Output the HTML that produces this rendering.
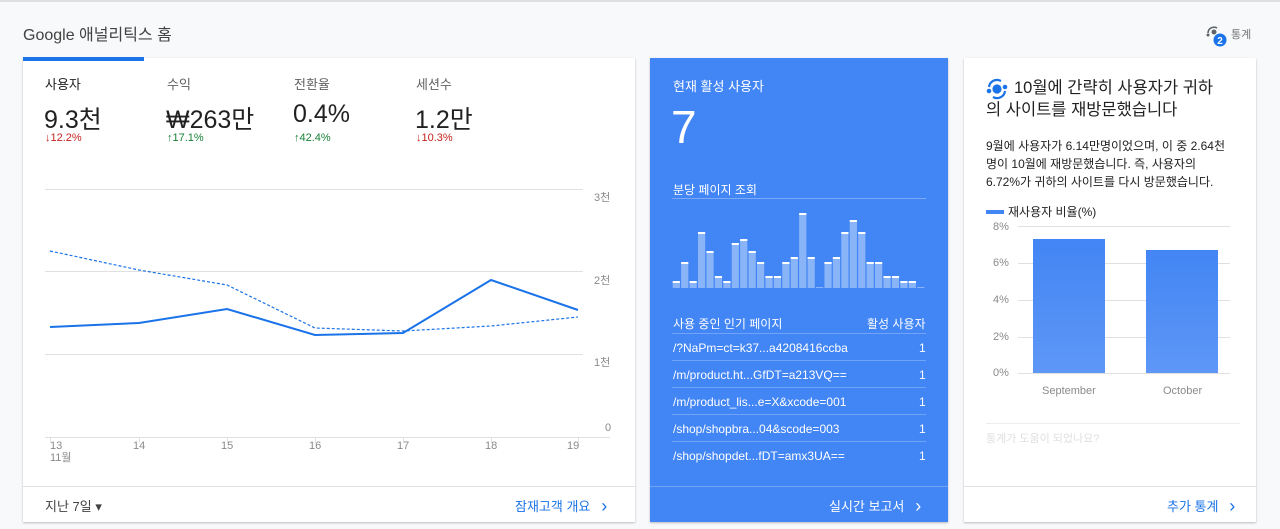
<!DOCTYPE html>
<html><head><meta charset="utf-8"><style>
*{margin:0;padding:0;box-sizing:border-box}
body{width:1280px;height:529px;background:#f8f9fa;font-family:"Liberation Sans","Noto Sans CJK KR",sans-serif;position:relative;overflow:hidden;color:#212121}
.a{position:absolute;white-space:nowrap}
.card{position:absolute;background:#fff;box-shadow:0 1px 2px rgba(0,0,0,.25)}
.lbl{font-size:13px;color:#616161}
.big{font-size:25px;color:#212121}
.dn{font-size:11px;color:#c5221f}
.up{font-size:11px;color:#188038}
.ax{font-size:11px;color:#8a8a8a}
.w{color:#fff;font-size:12px}
.chev{font-size:18px;position:relative;top:1px}
</style></head><body>
<div class="a" style="left:0;top:0;width:1280px;height:2px;background:#e0e0e0"></div>
<div class="a" style="left:23px;top:21px;font-size:16px;color:#424242">Google 애널리틱스 홈</div>
<div class="card" style="left:23px;top:58px;width:612px;height:464px"></div>
<div class="a" style="left:23px;top:57px;width:121px;height:4px;background:#1a73e8"></div>
<div class="a lbl" style="left:45px;top:74px;color:#212121">사용자</div>
<div class="a lbl" style="left:167px;top:74px">수익</div>
<div class="a lbl" style="left:294px;top:74px">전환율</div>
<div class="a lbl" style="left:416px;top:74px">세션수</div>
<div class="a big" style="left:44px;top:100px">9.3천</div>
<div class="a big" style="left:166px;top:100px">₩263만</div>
<div class="a big" style="left:293px;top:100px">0.4%</div>
<div class="a big" style="left:415px;top:100px">1.2만</div>
<div class="a dn" style="left:45px;top:132px">↓12.2%</div>
<div class="a up" style="left:167px;top:132px">↑17.1%</div>
<div class="a up" style="left:294px;top:132px">↑42.4%</div>
<div class="a dn" style="left:416px;top:132px">↓10.3%</div>
<div class="a ax" style="left:594px;top:189px">3천</div>
<div class="a ax" style="left:594px;top:272px">2천</div>
<div class="a ax" style="left:594px;top:354px">1천</div>
<div class="a ax" style="left:605px;top:422px">0</div>
<div class="a ax" style="left:50px;top:440px;line-height:12px">13<br>11월</div>
<div class="a ax" style="left:133px;top:440px">14</div>
<div class="a ax" style="left:221px;top:440px">15</div>
<div class="a ax" style="left:309px;top:440px">16</div>
<div class="a ax" style="left:397px;top:440px">17</div>
<div class="a ax" style="left:485px;top:440px">18</div>
<div class="a ax" style="left:567px;top:440px">19</div>
<div class="a" style="left:23px;top:486px;width:612px;height:1px;background:#e0e0e0"></div>
<div class="a" style="left:45px;top:496px;font-size:13px;color:#424242">지난 7일 ▾</div>
<div class="a" style="left:515px;top:495px;font-size:13px;color:#1a73e8">잠재고객 개요 &nbsp;&nbsp;<span class="chev">›</span></div>

<div class="a" style="left:650px;top:58px;width:298px;height:464px;background:#4285f4;box-shadow:0 1px 2px rgba(0,0,0,.25)"></div>
<div class="a w" style="left:673px;top:76px;font-size:13px">현재 활성 사용자</div>
<div class="a" style="left:671px;top:100px;font-size:46px;color:#fff;font-weight:300">7</div>
<div class="a w" style="left:673px;top:181px">분당 페이지 조회</div>
<div class="a" style="left:672px;top:198px;width:254px;height:1px;background:rgba(255,255,255,.3)"></div>
<div class="a w" style="left:673px;top:315px">사용 중인 인기 페이지</div>
<div class="a w" style="left:867px;top:315px">활성 사용자</div>
<div class="a w" style="left:673px;top:341px">/?NaPm=ct=k37...a4208416ccba</div>
<div class="a w" style="left:673px;top:368px">/m/product.ht...GfDT=a213VQ==</div>
<div class="a w" style="left:673px;top:395px">/m/product_lis...e=X&amp;xcode=001</div>
<div class="a w" style="left:673px;top:422px">/shop/shopbra...04&amp;scode=003</div>
<div class="a w" style="left:673px;top:449px">/shop/shopdet...fDT=amx3UA==</div>
<div class="a w" style="left:919px;top:341px">1</div><div class="a w" style="left:919px;top:368px">1</div><div class="a w" style="left:919px;top:395px">1</div><div class="a w" style="left:919px;top:422px">1</div><div class="a w" style="left:919px;top:449px">1</div>
<div class="a" style="left:672px;top:333px;width:254px;height:1px;background:rgba(255,255,255,.25)"></div>
<div class="a" style="left:672px;top:360px;width:254px;height:1px;background:rgba(255,255,255,.25)"></div>
<div class="a" style="left:672px;top:387px;width:254px;height:1px;background:rgba(255,255,255,.25)"></div>
<div class="a" style="left:672px;top:414px;width:254px;height:1px;background:rgba(255,255,255,.25)"></div>
<div class="a" style="left:672px;top:441px;width:254px;height:1px;background:rgba(255,255,255,.25)"></div>
<div class="a" style="left:650px;top:486px;width:298px;height:1px;background:rgba(255,255,255,.25)"></div>
<div class="a w" style="left:829px;top:495px;font-size:13px">실시간 보고서 &nbsp;&nbsp;<span class="chev">›</span></div>

<div class="card" style="left:964px;top:58px;width:292px;height:464px"></div>
<div class="a" style="left:1014px;top:77px;font-size:16.5px;line-height:22px;color:#212121">10월에 간략히 사용자가 귀하</div>
<div class="a" style="left:986px;top:99px;font-size:16.5px;line-height:22px;color:#212121">의 사이트를 재방문했습니다</div>
<div class="a" style="left:986px;top:137px;font-size:12px;line-height:18px;color:#212121">9월에 사용자가 6.14만명이었으며, 이 중 2.64천<br>명이 10월에 재방문했습니다. 즉, 사용자의<br>6.72%가 귀하의 사이트를 다시 방문했습니다.</div>
<div class="a" style="left:986px;top:210px;width:18px;height:4px;background:#4285f4"></div>
<div class="a" style="left:1008px;top:203px;font-size:12px;color:#212121">재사용자 비율(%)</div>
<div class="a ax" style="left:993px;top:221px">8%</div>
<div class="a ax" style="left:993px;top:257px">6%</div>
<div class="a ax" style="left:993px;top:294px">4%</div>
<div class="a ax" style="left:993px;top:331px">2%</div>
<div class="a ax" style="left:993px;top:367px">0%</div>
<div class="a ax" style="left:1042px;top:385px">September</div>
<div class="a ax" style="left:1163px;top:385px">October</div>
<div class="a" style="left:986px;top:423px;width:254px;height:1px;background:#eee"></div>
<div class="a" style="left:986px;top:430px;font-size:11px;color:#e0e0e0">통계가 도움이 되었나요?</div>
<div class="a" style="left:964px;top:486px;width:292px;height:1px;background:#e0e0e0"></div>
<div class="a" style="left:1167px;top:495px;font-size:13px;color:#1a73e8">추가 통계 &nbsp;&nbsp;<span class="chev">›</span></div>
<div class="a" style="left:1231px;top:26px;font-size:11px;color:#757575">통계</div>

<svg class="a" style="left:0;top:0" width="1280" height="529">
<g stroke="#e0e0e0" stroke-width="1">
<line x1="45" y1="189.5" x2="583" y2="189.5"/><line x1="45" y1="271.5" x2="583" y2="271.5"/><line x1="45" y1="354.5" x2="583" y2="354.5"/><line x1="45" y1="437.5" x2="610" y2="437.5"/>
<line x1="1018" y1="226.5" x2="1230" y2="226.5"/><line x1="1018" y1="263.5" x2="1230" y2="263.5"/><line x1="1018" y1="300.5" x2="1230" y2="300.5"/><line x1="1018" y1="337.5" x2="1230" y2="337.5"/><line x1="1018" y1="373.5" x2="1230" y2="373.5"/>
<line x1="50.5" y1="437" x2="50.5" y2="443"/><line x1="139.5" y1="437" x2="139.5" y2="443"/><line x1="227.5" y1="437" x2="227.5" y2="443"/><line x1="315.5" y1="437" x2="315.5" y2="443"/><line x1="403.5" y1="437" x2="403.5" y2="443"/><line x1="491.5" y1="437" x2="491.5" y2="443"/><line x1="578.5" y1="437" x2="578.5" y2="443"/>
</g>
<polyline fill="none" stroke="#1a73e8" stroke-width="2" points="50,327 139,323 227,309 315,335 403,333 491,280 578,310"/>
<polyline fill="none" stroke="#1a73e8" stroke-width="1.2" stroke-dasharray="3,2" points="50,251 139,270 227,285 315,328 403,331 491,326 578,317"/>
<defs><linearGradient id="g" x1="0" y1="0" x2="0" y2="1"><stop offset="0" stop-color="#4285f4"/><stop offset="1" stop-color="#5e97f6"/></linearGradient></defs>
<rect x="1033" y="239" width="72" height="134" fill="url(#g)"/>
<rect x="1146" y="250" width="72" height="123" fill="url(#g)"/>
<g id="bars"></g>
<g fill="none" stroke="#1a73e8" stroke-width="2.2"><circle cx="997" cy="89" r="3.5" fill="#1a73e8"/><path d="M989 87a8 8 0 0 1 12-6M1005 91a8 8 0 0 1-12 6"/><circle cx="989" cy="91" r="1.2" fill="#1a73e8"/><circle cx="1005" cy="87" r="1.2" fill="#1a73e8"/></g>
<g><path d="M1208 33a6 6 0 0 1 9-5" fill="none" stroke="#5f6368" stroke-width="1.6"/><circle cx="1214" cy="32" r="2.5" fill="#5f6368"/><circle cx="1208" cy="35" r="1.5" fill="#5f6368"/><circle cx="1220" cy="40" r="6.5" fill="#1a73e8"/><text x="1220" y="44" font-size="10" font-weight="bold" fill="#fff" text-anchor="middle" font-family="Liberation Sans">2</text></g>
</svg>
<script>
var t=[282,263,282,233,252,277,282,244,240,252,263,277,277,263,258,214,258,287,263,258,233,221,233,263,263,277,277,282,282,287];
var s='';for(var i=0;i<t.length;i++){var x=672.7+i*8.43;s+='<rect x="'+x+'" y="'+t[i]+'" width="7.2" height="'+(288-t[i])+'" fill="#8ab4f8"/>'+(t[i]<287?'<rect x="'+x+'" y="'+(t[i]-1)+'" width="7.2" height="2" fill="#fff"/>':'');}
document.getElementById('bars').innerHTML=s;
</script>
</body></html>
